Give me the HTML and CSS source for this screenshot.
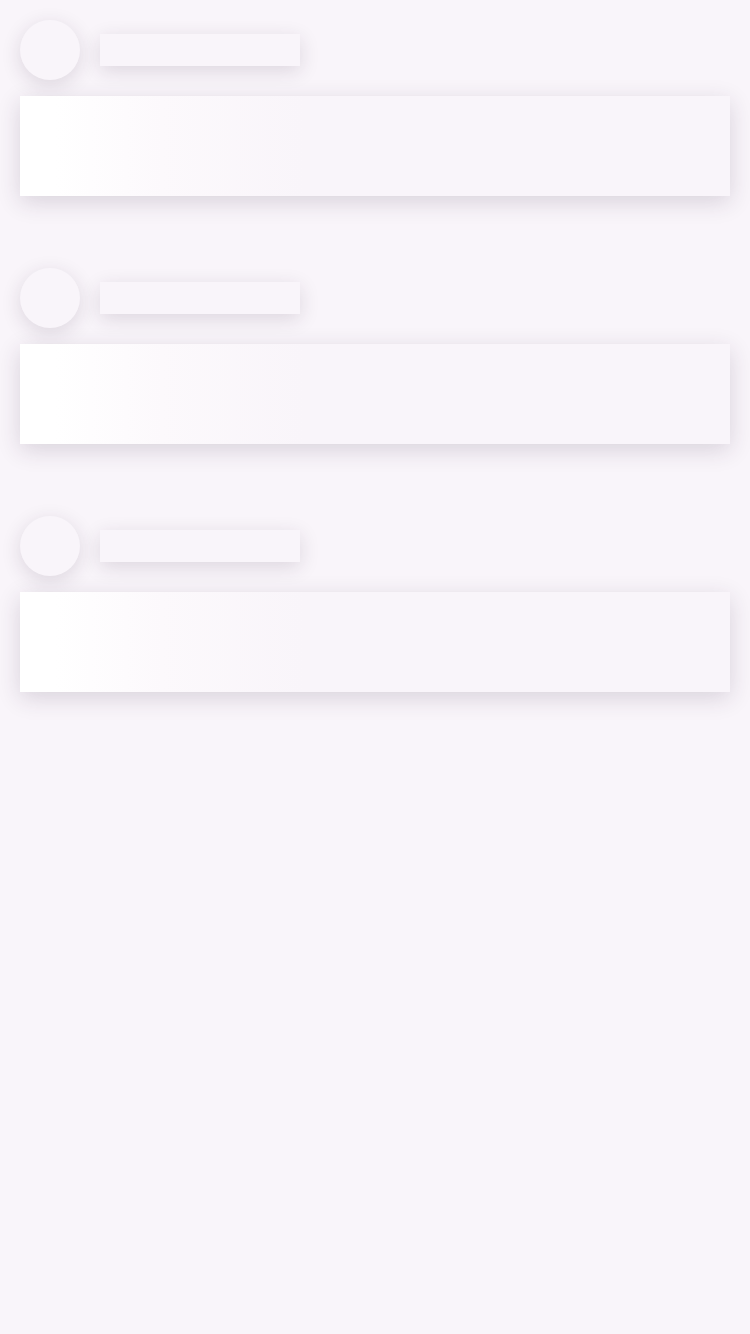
FILE: index.html
```html
<!DOCTYPE html>
<html>
<head>
<meta charset="utf-8">
<link rel="stylesheet" href="styles.css">
</head>
<body>
<div class="list">
  <div class="item">
    <div class="head"><div class="avatar"></div><div class="line"></div></div>
    <div class="card"></div>
  </div>
  <div class="item">
    <div class="head"><div class="avatar"></div><div class="line"></div></div>
    <div class="card"></div>
  </div>
  <div class="item">
    <div class="head"><div class="avatar"></div><div class="line"></div></div>
    <div class="card"></div>
  </div>
</div>
</body>
</html>
```
FILE: styles.css
```css
html, body {
  margin: 0;
  padding: 0;
  background: #f9f5fa;
  width: 750px;
  height: 1334px;
}
.list {
  display: flex;
  flex-direction: column;
  gap: 32px;
}
.item {
  padding: 20px;
  display: flex;
  flex-direction: column;
  gap: 16px;
}
.head {
  display: flex;
  align-items: center;
  gap: 20px;
  height: 60px;
}
.avatar {
  width: 60px;
  height: 60px;
  border-radius: 50%;
  background: #f9f5fa;
  box-shadow: 0 5px 20px rgba(50, 30, 60, 0.14);
}
.line {
  width: 200px;
  height: 32px;
  background: #f9f5fa;
  box-shadow: 0 5px 20px rgba(50, 30, 60, 0.14);
}
.card {
  height: 100px;
  background: linear-gradient(90deg, #ffffff 0%, #ffffff 5%, #fcf9fc 20%, #f9f5fa 40%, #f9f5fa 100%);
  box-shadow: 0 6px 22px rgba(50, 30, 60, 0.16);
}
```
